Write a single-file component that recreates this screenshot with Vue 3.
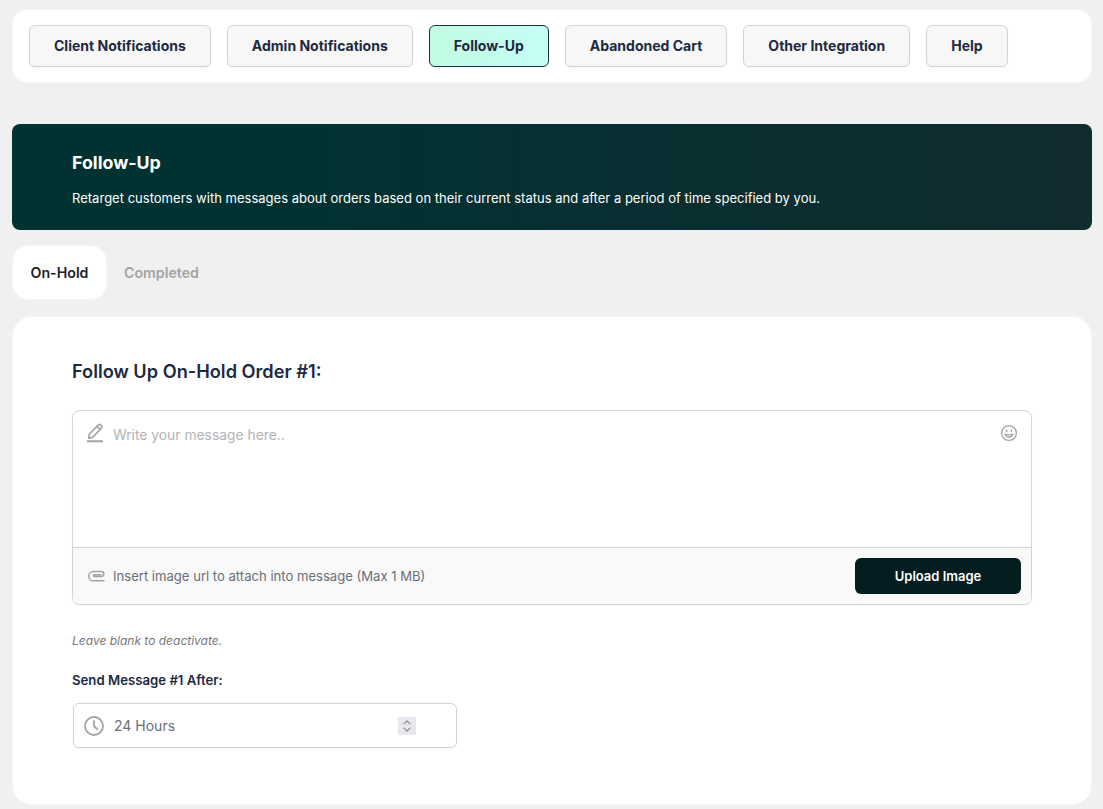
<template>
  <div class="pagina">
    <nav class="menu">
      <button
        v-for="item in menu"
        :key="item"
        type="button"
        class="btn-menu"
        :class="{ ativo: item === 'Follow-Up' }"
      >{{ item }}</button>
    </nav>

    <header class="banner">
      <h1>Follow-Up</h1>
      <p>Retarget customers with messages about orders based on their current status and after a period of time specified by you.</p>
    </header>

    <div class="abas">
      <button type="button" class="aba ativa">On-Hold</button>
      <button type="button" class="aba">Completed</button>
    </div>

    <section class="cartao">
      <h2>Follow Up On-Hold Order #1:</h2>

      <div class="editor">
        <div class="editor-topo">
          <svg class="ico-lapis" width="20" height="22" viewBox="0 0 20 22" fill="none" stroke="#a3a3a3" stroke-width="1.6" stroke-linejoin="round" stroke-linecap="round">
            <path d="M2.6 15.2 3.4 11 12.4 1.9a1.5 1.5 0 0 1 2.1 0l1 1a1.5 1.5 0 0 1 0 2.1L6.6 14.4Z" />
            <path d="M11 3.4 14 6.4" />
            <path d="M1 18.2h16" stroke-width="2" stroke-linecap="butt" />
          </svg>
          <span class="placeholder">Write your message here..</span>
          <svg class="ico-emoji" width="18" height="18" viewBox="0 0 18 18" fill="none" stroke="#a3a3a3" stroke-width="1.3" stroke-linecap="round">
            <circle cx="9" cy="9" r="7.4" />
            <path d="M5.2 10.4c.8 1.8 2.2 2.6 3.8 2.6s3-.8 3.8-2.6c-2.5.5-5.1.5-7.6 0Z" />
            <path d="M6.6 6.3v1.3M11.4 6.3v1.3" stroke-width="1.5" />
          </svg>
        </div>
        <div class="editor-rodape">
          <svg width="17" height="12" viewBox="0 0 17 12" fill="none" stroke="#a3a3a3" stroke-width="1.5" stroke-linecap="round">
            <path d="M16 10.8H5.4a4.6 4.6 0 0 1 0-9.3h8a2.5 2.5 0 0 1 0 5H6.3a.9.9 0 0 1 0-1.8H13" />
          </svg>
          <span class="anexo">Insert image url to attach into message (Max 1 MB)</span>
          <button type="button" class="btn-upload">Upload Image</button>
        </div>
      </div>

      <p class="dica">Leave blank to deactivate.</p>

      <label class="rotulo">Send Message #1 After:</label>
      <div class="campo-tempo">
        <svg width="22" height="22" viewBox="0 0 22 22" fill="none" stroke="#a3a3a3" stroke-width="1.8" stroke-linecap="round" stroke-linejoin="round">
          <circle cx="11" cy="11" r="9" />
          <path d="M11 5.8V11l3 3" />
        </svg>
        <span class="valor">24 Hours</span>
        <span class="spinner">
          <svg width="18" height="18" viewBox="0 0 18 18" fill="none" stroke="#8a8a8f" stroke-width="1.2" stroke-linecap="round" stroke-linejoin="round">
            <path d="M6 6.8 9 3.8l3 3M6 11.2l3 3 3-3" />
          </svg>
        </span>
      </div>
    </section>
  </div>
</template>

<script setup>
const menu = [
  'Client Notifications',
  'Admin Notifications',
  'Follow-Up',
  'Abandoned Cart',
  'Other Integration',
  'Help'
];
</script>

<style scoped>
.pagina {
  box-sizing: border-box;
  height: 809px;
  overflow: hidden;
  padding: 9px 11px 0 12px;
  background: #f0f0f0;
  font-family: Inter, "Liberation Sans", sans-serif;
  color: #1d2a40;
}

button { font-family: inherit; cursor: pointer; }

.menu {
  display: flex;
  gap: 16px;
  height: 74px;
  box-sizing: border-box;
  padding: 15px 16px;
  background: #fff;
  border: 1px solid #f6f6f6;
  border-radius: 14px;
  margin-bottom: 41px;
}

.btn-menu {
  height: 42px;
  padding: 0 24px 2px;
  background: #f7f7f8;
  border: 1px solid #d3d3de;
  border-radius: 6px;
  box-shadow: 0 1px 2px rgba(0, 0, 0, 0.04);
  font-size: 14.02px;
  font-weight: 650;
  color: #1d2a40;
  white-space: nowrap;
}

.btn-menu.ativo {
  background: linear-gradient(90deg, #c2fbe2, #c6fdf6);
  border-color: #1d2f45;
}

.banner {
  box-sizing: border-box;
  height: 106px;
  padding: 28px 60px 0;
  background: linear-gradient(90deg, #003232 25%, #112b2f);
  border-radius: 8px;
  color: #fff;
  margin-bottom: 15px;
}

.banner h1 {
  margin: 0 0 14px;
  font-size: 17.8px;
  line-height: 22px;
  font-weight: 650;
}

.banner p {
  margin: 0;
  font-size: 13.04px;
  line-height: 20px;
}

.abas {
  display: flex;
  height: 55px;
  margin-bottom: 16px;
}

.aba {
  padding: 0 16px;
  background: transparent;
  border: 1px solid transparent;
  border-radius: 16px;
  font-size: 14.2px;
  font-weight: 600;
  color: #a3a3a3;
}

.aba.ativa {
  width: 95px;
  padding: 0;
  background: #fff;
  border-color: #f6f6f6;
  color: #1d2027;
}

.cartao {
  box-sizing: border-box;
  height: 489px;
  padding: 43px 59px 0;
  background: #fff;
  border: 1px solid #f6f6f6;
  border-radius: 20px;
}

.cartao h2 {
  margin: 0 0 28px;
  font-size: 18.2px;
  line-height: 22px;
  font-weight: 600;
  color: #1d2a40;
}

.editor {
  box-sizing: border-box;
  height: 195px;
  width: 960px;
  border: 1px solid #d3d3de;
  border-radius: 8px;
  box-shadow: 0 1px 2px rgba(0, 0, 0, 0.05);
  overflow: hidden;
  display: flex;
  flex-direction: column;
}

.editor-topo {
  flex: 1;
  display: flex;
  align-items: flex-start;
  gap: 7px;
  padding: 12px 13px;
  border-bottom: 1px solid #d3d3de;
}

.ico-lapis { flex: none; }

.placeholder {
  flex: 1;
  font-size: 13.85px;
  line-height: 24px;
  color: #b3b3b8;
}

.ico-emoji { flex: none; margin-top: 1px; }

.editor-rodape {
  flex: none;
  height: 56px;
  box-sizing: border-box;
  display: flex;
  align-items: center;
  gap: 8px;
  padding: 0 10px 0 15px;
  background: #f9f9f9;
}

.anexo {
  flex: 1;
  font-size: 13.08px;
  color: #6b6f76;
}

.btn-upload {
  width: 166px;
  height: 36px;
  background: #031d20;
  border: none;
  border-radius: 6px;
  color: #fff;
  font-size: 13px;
  font-weight: 600;
}

.dica {
  margin: 28px 0 0;
  font-size: 12px;
  line-height: 16px;
  font-style: italic;
  color: #77777c;
}

.rotulo {
  display: block;
  margin: 23px 0 15px;
  font-size: 13.2px;
  line-height: 16px;
  font-weight: 600;
  color: #1d2a40;
}

.campo-tempo {
  box-sizing: border-box;
  width: 384px;
  height: 45px;
  margin-left: 1px;
  display: flex;
  align-items: center;
  padding: 0 40px 0 9px;
  border: 1px solid #d3d3de;
  border-radius: 6px;
  box-shadow: 0 1px 2px rgba(0, 0, 0, 0.05);
}

.valor {
  flex: 1;
  margin-left: 9px;
  font-size: 14px;
  color: #6b6f76;
}

.spinner {
  display: flex;
  width: 18px;
  height: 18px;
  background: #e8e8ee;
}
</style>

<style>
body { background: #f0f0f0; }
</style>
